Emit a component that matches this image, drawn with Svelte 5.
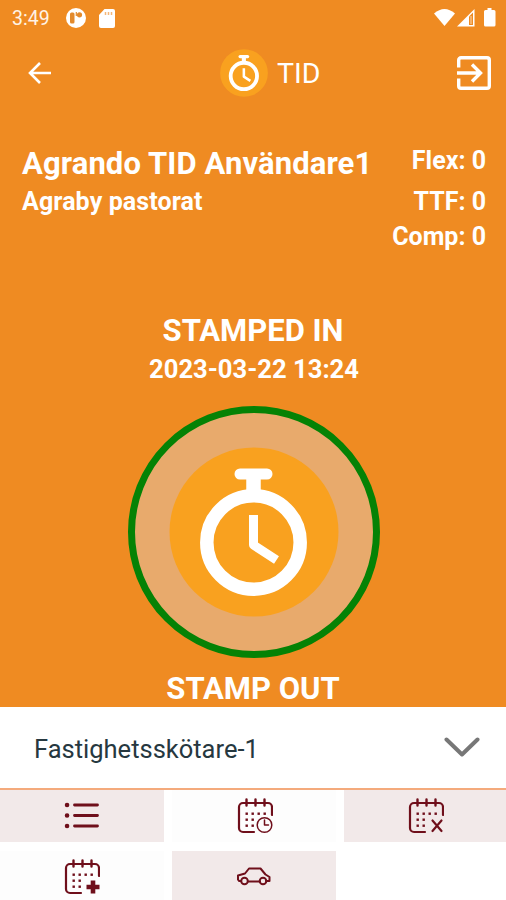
<script>
    let selected = 'Fastighetsskötare-1';

    const user = { name: 'Agrando TID Användare1', unit: 'Agraby pastorat' };

    const balances = [
        { label: 'Flex', value: 0 },
        { label: 'TTF', value: 0 },
        { label: 'Comp', value: 0 }
    ];

    const tabs = [
        { icon: 'list', tinted: true },
        { icon: 'clock', tinted: false },
        { icon: 'cross', tinted: true },
        { icon: 'plus', tinted: false },
        { icon: 'car', tinted: true }
    ];

    // Day dots inside the calendar icons
    const dots = [[8, 15], [14, 15], [20, 15], [26, 15], [8, 21], [14, 21], [8, 27], [14, 27]];
</script>

{#snippet stopwatch()}
<svg class="stopwatch" viewBox="0 0 170 170">
    <circle cx="85" cy="85" r="84.5" fill="#f9a11f"/>
    <g fill="none" stroke="#fff">
        <circle cx="84.5" cy="95.5" r="46.7" stroke-width="13.5"/>
        <path d="M84.5 27v23" stroke-width="14.5"/>
        <path d="M71 27h27" stroke-width="11" stroke-linecap="round"/>
        <path d="M84.5 68v30l23 15" stroke-width="9" stroke-linejoin="round"/>
    </g>
</svg>
{/snippet}

<div class="screen">
    <section class="top">
        <div class="status">
            <span class="time">3:49</span>
            <svg class="app" viewBox="0 0 20 20">
                <circle cx="10" cy="10" r="10" fill="#fff"/>
                <rect x="4" y="4.5" width="4.5" height="11" rx="1.5" fill="#e38a2c"/>
                <circle cx="13.5" cy="6.8" r="2.6" fill="#e38a2c"/>
                <path d="M10.3 4v4" stroke="#e38a2c" stroke-width="1.2"/>
            </svg>
            <svg class="card" viewBox="0 0 16 19">
                <path d="M5.5 0H14a2 2 0 0 1 2 2v15a2 2 0 0 1-2 2H2a2 2 0 0 1-2-2V6z" fill="#fff"/>
                <path d="M6.5 3v3M9.5 3v3M12.5 3v3" stroke="#f4b678" stroke-width="1.5"/>
            </svg>
            <svg class="signals" viewBox="0 0 64 20">
                <path d="M0 5.5Q10.5-3.500 21 5.500L10.500 18z" fill="#fff"/>
                <path d="M23 18.500L40.500 1v17.500z" fill="#fff"/>
                <path d="M35 8.500l4-4v12.500h-4z" fill="#ef8b22"/>
                <path d="M37 8v8" stroke="#fbd9b4" stroke-width="1"/>
                <path d="M53.500 0h4v2H60a1.500 1.500 0 0 1 1.500 1.500V17a1.500 1.500 0 0 1-1.500 1.500h-8.500A1.500 1.500 0 0 1 50 17V3.500A1.500 1.500 0 0 1 51.500 2h2z" fill="#fff"/>
            </svg>
        </div>

        <header>
            <svg class="back" viewBox="0 0 24 24">
                <path d="M23 12H2M12 2L2 12l10 10" fill="none" stroke="#fff" stroke-width="2.6"/>
            </svg>
            <div class="brand">
                <div class="logo">{@render stopwatch()}</div>
                <span>TID</span>
            </div>
            <svg class="exit" viewBox="0 0 34 34">
                <path d="M1.700 11.500V4a2.300 2.300 0 0 1 2.300-2.300h26A2.300 2.300 0 0 1 32.300 4v26a2.300 2.300 0 0 1-2.300 2.300H4A2.300 2.300 0 0 1 1.700 30v-7.500" fill="none" stroke="#fff" stroke-width="3.4"/>
                <path d="M0 17h24M15 8.500l8.500 8.500-8.500 8.500" fill="none" stroke="#fff" stroke-width="3.4"/>
            </svg>
        </header>

        <div class="user">
            <div class="who">
                <h1>{user.name}</h1>
                <h2>{user.unit}</h2>
            </div>
            <div class="balances">
                {#each balances as item}
                <div>{item.label}: {item.value}</div>
                {/each}
            </div>
        </div>

        <div class="stamp">
            <div class="state">STAMPED IN</div>
            <div class="date">2023-03-22 13:24</div>
            <button class="punch" aria-label="Stamp out">{@render stopwatch()}</button>
            <div class="action">STAMP OUT</div>
        </div>
    </section>

    <div class="select">
        <span>{selected}</span>
        <svg viewBox="0 0 36 22">
            <path d="M2.500 2.500L18 17.500l15.500-15" fill="none" stroke="#777" stroke-width="4" stroke-linecap="round" stroke-linejoin="round"/>
        </svg>
    </div>

    <nav>
        {#each tabs as tab}
        <div class="tab" class:tinted={tab.tinted}>
            <svg class="icon" class:shifted={tab.icon === 'clock'} viewBox="0 0 36 36" fill="none" stroke="#6f0f1b" stroke-width="2.2" stroke-linecap="round" stroke-linejoin="round">
                {#if tab.icon === 'list'}
                <path d="M10.500 7h23M10.500 17.500h23M10.500 28h23" stroke-width="2.8"/>
                <path d="M3 7h.1M3 17.500h.1M3 28h.1" stroke-width="4.5"/>
                {:else if tab.icon === 'car'}
                <path d="M5 22H3l-1-1.500v-4l7-2 4-5h11.500l5 6 4 2.500v4L32 22h-2M12 22.500h12" stroke-width="2"/>
                <circle cx="8.500" cy="22" r="3.300" stroke-width="2"/>
                <circle cx="27" cy="22" r="3.300" stroke-width="2"/>
                {:else}
                <path d="M17 34H6a4 4 0 0 1-4-4V9a4 4 0 0 1 4-4h25a4 4 0 0 1 4 4v8"/>
                <path d="M9.500 1.500v6M18.500 1.500v6M27.500 1.500v6" stroke-width="2.4"/>
                {#each dots as [x, y]}
                <rect x={x + 0.5} y={y - 0.5} width="2.4" height="2.4" fill="#6f0f1b" stroke="none"/>
                {/each}
                {#if tab.icon === 'clock'}
                <circle cx="27.500" cy="27" r="7.300" stroke-width="1.5"/>
                <path d="M27.500 22v5h4" stroke-width="1.5"/>
                {:else if tab.icon === 'cross'}
                <path d="M24.500 22.500l9 10.500M33.500 22.500l-9 10.500"/>
                {:else}
                <path d="M29 21.500v13M22.500 28h13" stroke-width="4.6" stroke-linecap="butt"/>
                {/if}
                {/if}
            </svg>
        </div>
        {/each}
    </nav>
</div>

<style>
:global(body){
    background: #fff;
}
.screen{
    width: 506px;
    height: 900px;
    display: flex;
    flex-direction: column;
    overflow: hidden;
    font-family: Roboto, sans-serif;
    color: #fff;
}
svg{
    display: block;
    flex: none;
}
.top{
    height: 707px;
    flex: none;
    background: #ef8b22;
}
.status{
    height: 36px;
    display: flex;
    align-items: center;
    padding: 0 8px 0 12px;
}
.time{
    font-size: 19.5px;
    width: 54px;
    color: #fff3e6;
}
.app{
    width: 20px;
    height: 20px;
}
.card{
    width: 16px;
    height: 19px;
    margin-left: 13px;
}
.signals{
    width: 64px;
    height: 20px;
    margin-left: auto;
}
header{
    height: 74px;
    display: flex;
    align-items: center;
    padding: 0 15px 0 28px;
}
.back{
    width: 24px;
    height: 24px;
}
.exit{
    width: 34px;
    height: 34px;
    margin-left: auto;
}
.brand{
    display: flex;
    align-items: center;
    gap: 9px;
    margin-left: 168px;
    font-size: 28.5px;
    line-height: 34px;
}
.brand span{
    padding-top: 2px;
}
.logo{
    width: 48px;
    height: 48px;
}
.stopwatch{
    width: 100%;
    height: 100%;
}
.user{
    height: 203px;
    box-sizing: border-box;
    padding: 36px 20px 0 22px;
    display: flex;
    justify-content: space-between;
    font-weight: 700;
    white-space: nowrap;
}
h1, h2{
    margin: 0;
    font-weight: 700;
}
h1{
    font-size: 31px;
    line-height: 36px;
    letter-spacing: 0.1px;
}
h2{
    font-size: 25px;
    line-height: 40px;
    letter-spacing: 0.1px;
}
.balances{
    font-size: 25px;
    line-height: 35px;
    text-align: right;
}
.balances div:first-child{
    margin-bottom: 6px;
    margin-top: -3px;
}
.stamp{
    display: flex;
    flex-direction: column;
    align-items: center;
    font-weight: 700;
}
.state, .action{
    font-size: 31px;
    line-height: 36px;
}
.date{
    font-size: 25.6px;
    line-height: 40px;
    padding-left: 2px;
}
.punch{
    width: 252px;
    height: 252px;
    box-sizing: border-box;
    margin: 17px 0 13px 2px;
    padding: 34px;
    border: 7px solid #058205;
    border-radius: 50%;
    background: #e8aa6c;
}
.select{
    height: 81px;
    flex: none;
    display: flex;
    align-items: center;
    justify-content: space-between;
    padding: 0 26px 0 34px;
    color: #263840;
    font-size: 25.5px;
    border-bottom: 2px solid #f4aa7c;
}
.select span{
    padding-top: 2px;
}
.select svg{
    width: 36px;
    height: 22px;
}
nav{
    display: grid;
    grid-template-columns: 164px 164px 164px;
    grid-auto-rows: 52px;
    gap: 9px 8px;
}
.tab{
    display: flex;
    justify-content: center;
    align-items: center;
    background: #fdfdfd;
}
.tinted{
    background: #f2e9e9;
}
.icon{
    width: 36px;
    height: 36px;
}
.shifted{
    margin-left: 1px;
}
</style>
